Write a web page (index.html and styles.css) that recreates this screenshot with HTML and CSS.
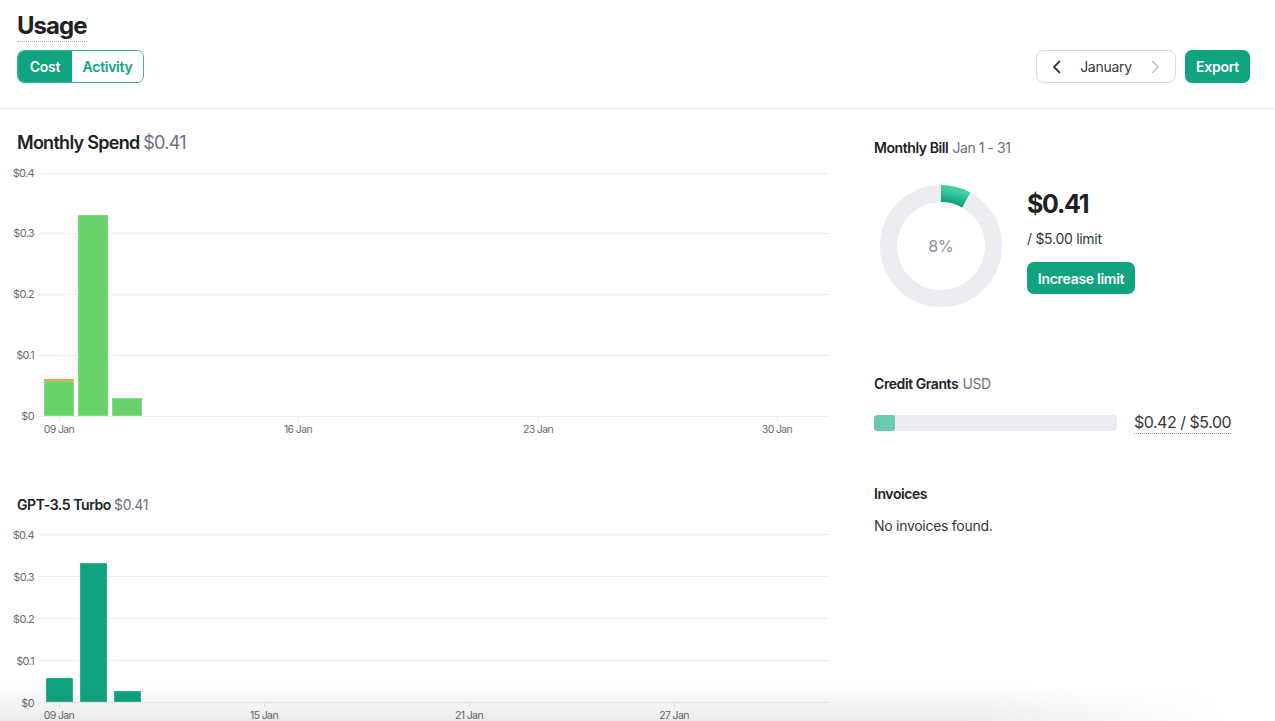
FILE: index.html
```html
<!DOCTYPE html>
<html lang="en">
<head>
<meta charset="utf-8">
<title>Usage</title>
<link rel="stylesheet" href="styles.css">
</head>
<body>
<header class="top">
  <div class="top-left">
    <h1 class="title">Usage</h1>
    <div class="seg">
      <button class="seg-btn seg-cost active">Cost</button>
      <button class="seg-btn seg-activity">Activity</button>
    </div>
  </div>
  <div class="top-right">
    <div class="month">
      <svg class="chev" width="16" height="16" viewBox="0 0 16 16"><path d="M10.5 2.5 L5 8 L10.5 13.5" fill="none" stroke="#353740" stroke-width="1.8" stroke-linecap="round" stroke-linejoin="round"/></svg>
      <span class="month-name">January</span>
      <svg class="chev" width="16" height="16" viewBox="0 0 16 16"><path d="M5.5 2.5 L11 8 L5.5 13.5" fill="none" stroke="#c5c5d2" stroke-width="1.6" stroke-linecap="round" stroke-linejoin="round"/></svg>
    </div>
    <button class="btn-primary btn-export">Export</button>
  </div>
</header>

<main class="content">
  <section class="charts">
    <div class="chart-block">
      <h2 class="chart-title">Monthly Spend <span class="amt">$0.41</span></h2>
      <svg class="chart chart-1" width="829" height="277" viewBox="0 0 829 277">
        <g class="grid">
          <line x1="38" y1="10.5" x2="829" y2="10.5"/>
          <line x1="38" y1="70.5" x2="829" y2="70.5"/>
          <line x1="38" y1="131.5" x2="829" y2="131.5"/>
          <line x1="38" y1="192.5" x2="829" y2="192.5"/>
          <line x1="38" y1="253.5" x2="829" y2="253.5"/>
        </g>
        <g class="ylab">
          <text x="34" y="14">$0.4</text>
          <text x="34" y="74">$0.3</text>
          <text x="34" y="135">$0.2</text>
          <text x="34" y="196">$0.1</text>
          <text x="34" y="257">$0</text>
        </g>
        <g class="ticks">
          <line x1="59.5" y1="254" x2="59.5" y2="258"/>
          <line x1="298.5" y1="254" x2="298.5" y2="258"/>
          <line x1="538.5" y1="254" x2="538.5" y2="258"/>
          <line x1="777.5" y1="254" x2="777.5" y2="258"/>
        </g>
        <g class="bars-light">
          <rect x="44" y="218" width="30" height="35"/>
          <rect x="78" y="52" width="30" height="201"/>
          <rect x="112" y="235" width="30" height="18"/>
        </g>
        <rect class="bar-orange" x="44" y="216" width="30" height="2"/>
        <g class="xlab">
          <text x="59" y="270">09 Jan</text>
          <text x="298" y="270">16 Jan</text>
          <text x="538" y="270">23 Jan</text>
          <text x="777" y="270">30 Jan</text>
        </g>
      </svg>
    </div>

    <div class="chart-block chart-block-2">
      <h2 class="chart-title small">GPT-3.5 Turbo <span class="amt">$0.41</span></h2>
      <svg class="chart chart-2" width="829" height="197" viewBox="0 0 829 197">
        <g class="grid">
          <line x1="38" y1="9.5" x2="829" y2="9.5"/>
          <line x1="38" y1="51.5" x2="829" y2="51.5"/>
          <line x1="38" y1="93.5" x2="829" y2="93.5"/>
          <line x1="38" y1="135.5" x2="829" y2="135.5"/>
          <line x1="38" y1="177.5" x2="829" y2="177.5"/>
        </g>
        <g class="ylab">
          <text x="34" y="14">$0.4</text>
          <text x="34" y="56">$0.3</text>
          <text x="34" y="98">$0.2</text>
          <text x="34" y="140">$0.1</text>
          <text x="34" y="182">$0</text>
        </g>
        <g class="ticks">
          <line x1="59.5" y1="178" x2="59.5" y2="182"/>
          <line x1="264.5" y1="178" x2="264.5" y2="182"/>
          <line x1="469.5" y1="178" x2="469.5" y2="182"/>
          <line x1="674.5" y1="178" x2="674.5" y2="182"/>
        </g>
        <g class="bars-dark">
          <rect x="46" y="153" width="27" height="24"/>
          <rect x="80" y="38" width="27" height="139"/>
          <rect x="114" y="166" width="27" height="11"/>
        </g>
        <g class="xlab">
          <text x="59" y="194">09 Jan</text>
          <text x="264" y="194">15 Jan</text>
          <text x="469" y="194">21 Jan</text>
          <text x="674" y="194">27 Jan</text>
        </g>
      </svg>
    </div>
  </section>

  <aside class="side">
    <h3 class="side-title">Monthly Bill <span class="sub">Jan 1 - 31</span></h3>
    <div class="bill">
      <div class="donut">
        <svg width="134" height="134" viewBox="0 0 134 134">
          <defs>
            <linearGradient id="arcGrad" x1="0" y1="1" x2="1" y2="0">
              <stop offset="0" stop-color="#10a37f"/>
              <stop offset="1" stop-color="#3fd1a3"/>
            </linearGradient>
          </defs>
          <circle cx="67" cy="67" r="52.5" fill="none" stroke="#ececf1" stroke-width="17"/>
          <path d="M67 14.5 A52.5 52.5 0 0 1 92.3 21" fill="none" stroke="url(#arcGrad)" stroke-width="17"/>
        </svg>
        <span class="donut-label">8%</span>
      </div>
      <div class="bill-info">
        <div class="bill-amount">$0.41</div>
        <div class="bill-limit">/ $5.00 limit</div>
        <button class="btn-primary btn-inc">Increase limit</button>
      </div>
    </div>

    <h3 class="side-title grants-title">Credit Grants <span class="sub">USD</span></h3>
    <div class="grant-row">
      <div class="grant-bar"><div class="grant-fill"></div></div>
      <span class="grant-value">$0.42 / $5.00</span>
    </div>

    <h3 class="side-title invoices-title">Invoices</h3>
    <p class="no-inv">No invoices found.</p>
  </aside>
</main>

<div class="bottom-fade"></div>
</body>
</html>
```

FILE: styles.css
```css
* {
  box-sizing: border-box;
  margin: 0;
  padding: 0;
}

html, body {
  height: 100%;
}

body {
  font-family: Inter, "Noto Sans", "Liberation Sans", sans-serif;
  color: #202123;
  background: #ffffff;
  overflow: hidden;
}

button {
  font-family: inherit;
  cursor: pointer;
}

/* ---------- Header ---------- */
.top {
  display: flex;
  justify-content: space-between;
  align-items: flex-end;
  height: 109px;
  padding: 0 25px 25px 17px;
  border-bottom: 1px solid #ececf1;
}

.top-left {
  display: flex;
  flex-direction: column;
  align-items: flex-start;
}

.title {
  font-size: 24px;
  line-height: 30px;
  padding-top: 1px;
  font-weight: 700;
  letter-spacing: -0.04em;
  color: #202123;
  border-bottom: 1px dotted #acacbe;
  margin-bottom: 8px;
}

.seg {
  display: flex;
  height: 33px;
  border: 1px solid #3fb28f;
  border-radius: 7px;
  overflow: hidden;
}

.seg-btn {
  border: none;
  background: #ffffff;
  color: #10a37f;
  font-size: 14px;
  font-weight: 600;
  letter-spacing: -0.02em;
}

.seg-cost {
  width: 54px;
}

.seg-activity {
  width: 71px;
}

.seg-btn.active {
  background: #10a37f;
  color: #ffffff;
}

.top-right {
  display: flex;
  gap: 9px;
}

.month {
  width: 140px;
  height: 33px;
  border: 1px solid #d9d9e3;
  border-radius: 8px;
  display: flex;
  align-items: center;
  justify-content: space-between;
  padding: 0 12px 0 12px;
}

.chev {
  display: block;
}

.month-name {
  font-size: 14px;
  color: #353740;
  letter-spacing: -0.02em;
}

.btn-primary {
  border: none;
  background: #10a37f;
  color: #ffffff;
  font-size: 14px;
  font-weight: 600;
  letter-spacing: -0.02em;
  border-radius: 7px;
}

.btn-export {
  width: 65px;
  height: 33px;
}

/* ---------- Content ---------- */
.content {
  display: flex;
  gap: 45px;
  padding: 22px 0 0 17px;
}

.charts {
  width: 812px;
  flex: none;
}

.chart-title {
  font-size: 18px;
  line-height: 24px;
  font-weight: 600;
  letter-spacing: -0.04em;
  color: #202123;
}

.chart-title .amt {
  font-weight: 400;
  color: #6e6e80;
  margin-left: 0;
}

.chart-title.small {
  font-size: 14px;
  line-height: 20px;
  letter-spacing: -0.03em;
}

.chart {
  display: block;
  margin-left: -17px;
  margin-top: 8px;
  overflow: visible;
}

.chart-2 {
  margin-top: 10px;
}

.chart-block-2 {
  margin-top: 55px;
}

.grid line {
  stroke: #ececf1;
  stroke-width: 1;
}

.ticks line {
  stroke: #e3e3e8;
  stroke-width: 1;
}

.ylab text {
  font-size: 11px;
  fill: #6b6b70;
  text-anchor: end;
  letter-spacing: -0.06em;
}

.xlab text {
  font-size: 10.5px;
  fill: #6b6b70;
  text-anchor: middle;
  letter-spacing: -0.06em;
}

.bars-light rect {
  fill: #68d36a;
  stroke: rgba(255, 255, 255, 0.35);
  stroke-width: 1;
}

.bar-orange {
  fill: #f1a447;
}

.bars-dark rect {
  fill: #10a37f;
  stroke: rgba(255, 255, 255, 0.3);
  stroke-width: 1;
}

/* ---------- Side panel ---------- */
.side {
  width: 376px;
  padding-top: 7px;
}

.side-title {
  font-size: 14px;
  line-height: 20px;
  font-weight: 600;
  letter-spacing: -0.03em;
  color: #202123;
}

.side-title .sub {
  font-weight: 400;
  color: #6e6e80;
  margin-left: 1px;
}

.bill {
  display: flex;
  gap: 19px;
  margin-top: 21px;
}

.donut {
  position: relative;
  width: 134px;
  height: 134px;
  flex: none;
}

.donut svg {
  display: block;
}

.donut-label {
  position: absolute;
  inset: 0;
  display: flex;
  align-items: center;
  justify-content: center;
  font-size: 16px;
  color: #8e8ea0;
}

.bill-info {
  padding-top: 9px;
  display: flex;
  flex-direction: column;
  align-items: flex-start;
}

.bill-amount {
  font-size: 25px;
  line-height: 32px;
  font-weight: 700;
  letter-spacing: -0.05em;
  color: #202123;
}

.bill-limit {
  font-size: 14px;
  line-height: 20px;
  margin-top: 9px;
  color: #353740;
  letter-spacing: -0.02em;
}

.btn-inc {
  margin-top: 13px;
  width: 108px;
  height: 32px;
}

.grants-title {
  margin-top: 61px;
}

.grant-row {
  display: flex;
  align-items: center;
  gap: 17px;
  height: 24px;
  margin-top: 17px;
}

.grant-bar {
  width: 243px;
  height: 16px;
  background: #ececf1;
  border-radius: 3px;
  overflow: hidden;
}

.grant-fill {
  width: 21px;
  height: 100%;
  background: #6bc9b0;
  border-radius: 3px;
}

.grant-value {
  font-size: 16px;
  line-height: 21px;
  color: #353740;
  border-bottom: 1px dotted #8e8ea0;
  letter-spacing: -0.03em;
}

.invoices-title {
  margin-top: 49px;
}

.no-inv {
  margin-top: 12px;
  font-size: 14px;
  line-height: 20px;
  color: #353740;
  letter-spacing: -0.02em;
}

/* ---------- Bottom fade overlay ---------- */
.bottom-fade {
  position: fixed;
  left: 0;
  bottom: 0;
  width: 1230px;
  height: 38px;
  pointer-events: none;
  background: linear-gradient(to bottom, rgba(0, 0, 0, 0), rgba(0, 0, 0, 0.08));
  -webkit-mask-image: linear-gradient(to right, #000 0%, #000 78%, transparent 100%);
  mask-image: linear-gradient(to right, #000 0%, #000 78%, transparent 100%);
}
```
